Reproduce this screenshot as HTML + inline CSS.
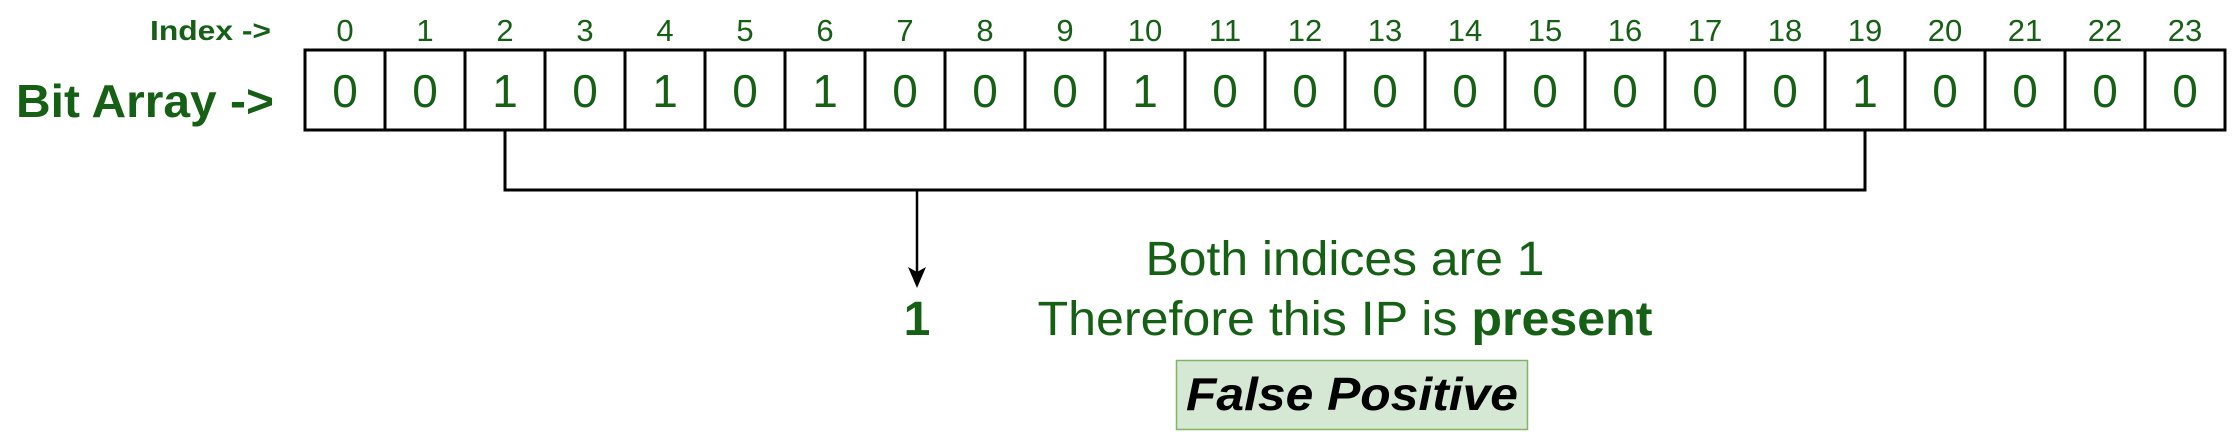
<!DOCTYPE html>
<html><head><style>html,body{margin:0;padding:0;background:#fff;}svg{display:block}</style></head>
<body>
<svg width="2237" height="441" viewBox="0 0 2237 441" xmlns="http://www.w3.org/2000/svg" font-family="Liberation Sans, sans-serif">
<rect x="0" y="0" width="2237" height="441" fill="#fff"/>
<g fill="#166016">
<text x="271" y="40" font-size="28" font-weight="bold" text-anchor="end" textLength="121" lengthAdjust="spacingAndGlyphs">Index -&gt;</text>
<text x="274" y="117" font-size="46" font-weight="bold" text-anchor="end" textLength="258" lengthAdjust="spacingAndGlyphs">Bit Array -&gt;</text>
</g>
<g fill="#166016" font-size="31" text-anchor="middle">
<text x="345" y="41">0</text><text x="425" y="41">1</text><text x="505" y="41">2</text><text x="585" y="41">3</text><text x="665" y="41">4</text><text x="745" y="41">5</text><text x="825" y="41">6</text><text x="905" y="41">7</text><text x="985" y="41">8</text><text x="1065" y="41">9</text><text x="1145" y="41">10</text><text x="1225" y="41">11</text><text x="1305" y="41">12</text><text x="1385" y="41">13</text><text x="1465" y="41">14</text><text x="1545" y="41">15</text><text x="1625" y="41">16</text><text x="1705" y="41">17</text><text x="1785" y="41">18</text><text x="1865" y="41">19</text><text x="1945" y="41">20</text><text x="2025" y="41">21</text><text x="2105" y="41">22</text><text x="2185" y="41">23</text>
</g>
<g fill="#166016" font-size="46" text-anchor="middle">
<text x="345" y="107">0</text><text x="425" y="107">0</text><text x="505" y="107">1</text><text x="585" y="107">0</text><text x="665" y="107">1</text><text x="745" y="107">0</text><text x="825" y="107">1</text><text x="905" y="107">0</text><text x="985" y="107">0</text><text x="1065" y="107">0</text><text x="1145" y="107">1</text><text x="1225" y="107">0</text><text x="1305" y="107">0</text><text x="1385" y="107">0</text><text x="1465" y="107">0</text><text x="1545" y="107">0</text><text x="1625" y="107">0</text><text x="1705" y="107">0</text><text x="1785" y="107">0</text><text x="1865" y="107">1</text><text x="1945" y="107">0</text><text x="2025" y="107">0</text><text x="2105" y="107">0</text><text x="2185" y="107">0</text>
</g>
<g stroke="#000" stroke-width="3" fill="none">
<rect x="305" y="50" width="1920" height="80"/>
<path d="M385 50V130M465 50V130M545 50V130M625 50V130M705 50V130M785 50V130M865 50V130M945 50V130M1025 50V130M1105 50V130M1185 50V130M1265 50V130M1345 50V130M1425 50V130M1505 50V130M1585 50V130M1665 50V130M1745 50V130M1825 50V130M1905 50V130M1985 50V130M2065 50V130M2145 50V130"/>
<path d="M505 130V190H1865V130"/>
<path d="M917 190V278" stroke-width="2.5"/>
</g>
<path d="M908 267L917 288L926 267L917 272Z" fill="#000"/>
<g fill="#166016" text-anchor="middle" font-size="48">
<text x="917" y="335" font-weight="bold">1</text>
<text x="1345" y="275" textLength="399" lengthAdjust="spacingAndGlyphs">Both indices are 1</text>
<text x="1345" y="335" textLength="615" lengthAdjust="spacingAndGlyphs">Therefore this IP is <tspan font-weight="bold">present</tspan></text>
</g>
<rect x="1176.5" y="360.5" width="351" height="69" fill="#d5e8d4" stroke="#82b366" stroke-width="1.5"/>
<text x="1352" y="410" font-size="46" font-weight="bold" font-style="italic" text-anchor="middle" fill="#000" textLength="332" lengthAdjust="spacingAndGlyphs">False Positive</text>
</svg>
</body></html>
